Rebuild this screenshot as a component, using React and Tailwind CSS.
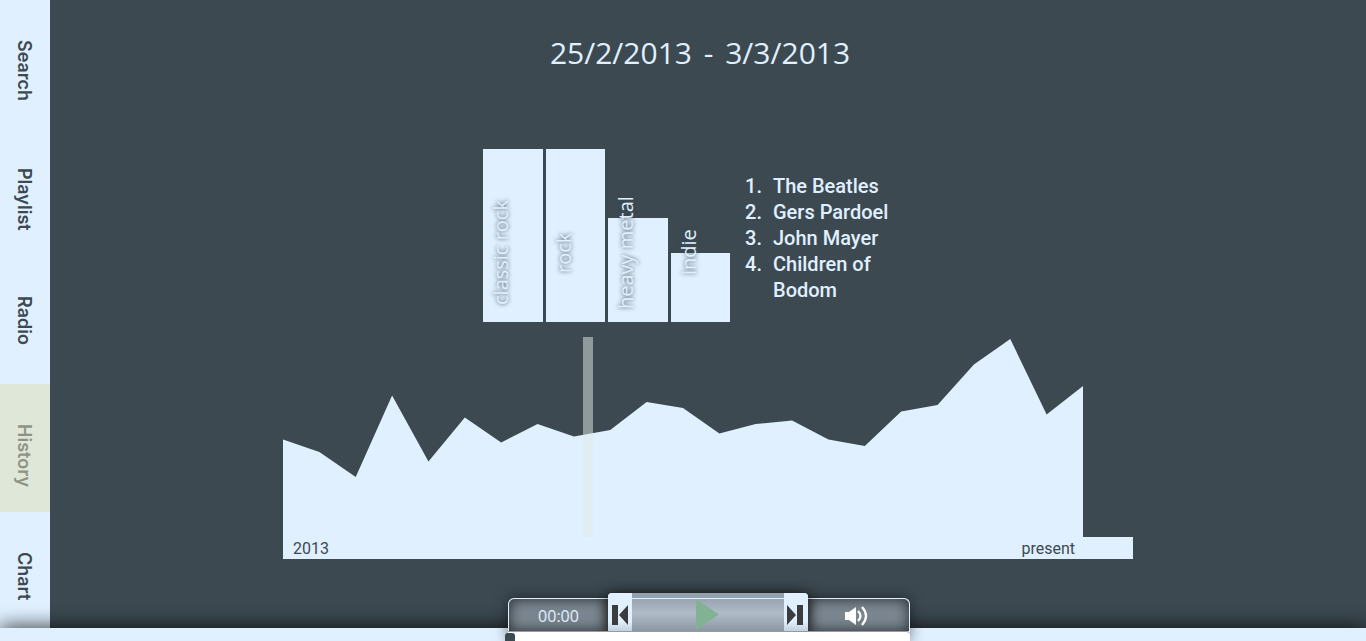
import React from "react";

const TABS = ["Search", "Playlist", "Radio", "History", "Chart"];

const GENRES = [
  { name: "classic rock", height: "h-[173px]" },
  { name: "rock", height: "h-[173px]" },
  { name: "heavy metal", height: "h-[104px]" },
  { name: "indie", height: "h-[69px]" },
];

const ARTISTS = ["The Beatles", "Gers Pardoel", "John Mayer", "Children of Bodom"];

// Distance of each sample from the top of the 200-unit plot.
const SAMPLES = [
  102.5, 115, 140, 58.5, 124.5, 80.5, 105.5, 87, 99.5, 93, 65, 71, 96.5, 87,
  83.5, 102.5, 109, 74.5, 68, 27.5, 2, 77.5, 49,
];

function Sidebar() {
  return (
    <nav className="w-[50px] shrink-0 overflow-hidden bg-[#e0f0ff]" aria-label="Sections">
      {TABS.map((tab) => {
        const active = tab === "History";
        return (
          <a
            key={tab}
            href={"#" + tab.toLowerCase()}
            aria-current={active ? "page" : undefined}
            className={
              "flex h-32 w-full items-center pt-10 pr-0.5 font-['Inter',sans-serif] text-lg leading-5 font-semibold [writing-mode:vertical-rl] " +
              (active ? "bg-[#dfe8d8] text-[#8f9385]" : "text-[#3c4951]")
            }
          >
            {tab}
          </a>
        );
      })}
    </nav>
  );
}

function GenreBars() {
  return (
    <div className="flex h-[173px] w-[247px] items-end gap-[3px]">
      {GENRES.map((g) => (
        <div key={g.name} className={"relative flex-1 bg-[#e0f0ff] " + g.height}>
          <span className="absolute bottom-0 left-1 h-[139px] rotate-180 text-center font-['Open_Sans',sans-serif] text-xl leading-7 whitespace-nowrap text-[#e0f0ff] [text-shadow:0_0_4px_#3c4951] [writing-mode:vertical-rl]">
            {g.name}
          </span>
        </div>
      ))}
    </div>
  );
}

function Timeline() {
  const step = 800 / (SAMPLES.length - 1);
  const line = SAMPLES.map((y, i) => `${i * step},${y}`).join(" ");
  return (
    <div className="w-[850px]">
      <svg viewBox="0 0 800 200" className="block h-[200px] w-[800px]" role="img" aria-label="Listening history">
        <polygon points={`0,200 ${line} 800,200`} fill="#e0f0ff" />
        <rect x="300" y="0" width="10" height="200" fill="#dfece8" fillOpacity="0.5" />
      </svg>
      <div className="flex h-[22px] justify-between bg-[#e0f0ff] pr-[58px] pl-2.5 text-base leading-6">
        <span>2013</span>
        <span>present</span>
      </div>
    </div>
  );
}

function Player() {
  return (
    <div className="w-[402px] shrink-0 rounded-t-md shadow-[0_0_14px_rgba(0,0,0,0.5)]">
      <div className="flex h-[33px] items-end rounded-t-md border border-b-0 border-[#e0f0ff] bg-[#7b8791]">
        <div className="flex h-8 w-[99px] items-center justify-center rounded-tl-md pt-0.5 font-['Open_Sans',sans-serif] text-base text-[#e0f0ff] shadow-[inset_0_0_14px_rgba(0,0,0,0.7)]">
          00:00
        </div>
        <div className="flex h-[38px] w-[200px] shrink-0 overflow-hidden rounded-t-sm bg-[#acb9c5] shadow-[0_0_14px_rgba(0,0,0,0.7)]">
          <button type="button" aria-label="Previous" className="flex w-6 items-end justify-center bg-linear-to-b from-[#e0f0ff] from-75% to-[#c3d0dd] pb-1.5">
            <svg viewBox="0 0 18 20" className="h-5 w-[18px]" fill="#3a3c3d">
              <path d="M1 0h6v20H1zM17 0v20L8 10z" />
            </svg>
          </button>
          <button type="button" aria-label="Play" className="flex flex-1 flex-col">
            <span className="h-1.5 w-full border-b border-[#e0f0ff] bg-[#93a0ae]" />
            <span className="flex w-full flex-1 items-start justify-center bg-linear-to-b from-[#98a4b0] via-[#b0bdc9] via-45% to-[#8b97a2]">
              <svg viewBox="0 0 24 31" className="h-[31px] w-6" fill="#82b193">
                <path d="M0 0l23 15.500L0 31z" />
              </svg>
            </span>
          </button>
          <button type="button" aria-label="Next" className="flex w-6 items-end justify-center bg-linear-to-b from-[#e0f0ff] from-75% to-[#c3d0dd] pr-0.5 pb-1.5">
            <svg viewBox="0 0 18 20" className="h-5 w-[18px]" fill="#3a3c3d">
              <path d="M11 0h6v20h-6zM1 0v20l9-10z" />
            </svg>
          </button>
        </div>
        <button
          type="button"
          aria-label="Volume"
          className="flex h-8 flex-1 items-center justify-center rounded-tr-md pt-0.5 pr-1 shadow-[inset_0_0_14px_rgba(0,0,0,0.7)]"
        >
          <svg viewBox="0 0 23 20" className="h-5 w-[23px]" fill="none" stroke="#fff" strokeWidth="2.200">
            <path d="M0 6h4l7-5v18l-7-5H0z" fill="#fff" stroke="none" />
            <path d="M13 5q5 5 0 10" />
            <path d="M17 1q8 9 0 18" />
          </svg>
        </button>
      </div>
      <div className="relative h-2.5 rounded-tr-sm border-t border-[#9a9a9a] bg-white">
        <div className="absolute top-px -left-[3px] h-2 w-2.5 rounded-t-[3px] bg-[#3c4951]" />
      </div>
    </div>
  );
}

export default function App() {
  return (
    <div className="flex h-screen flex-col overflow-hidden bg-[#3c4951] font-['Roboto',sans-serif] text-[#3c4951]">
      <div className="flex min-h-0 flex-1">
        <Sidebar />
        <main className="flex flex-1 flex-col items-center overflow-hidden">
          <h1 className="mt-8 pr-4 font-['Open_Sans',sans-serif] text-3xl leading-[42px] text-[#e0f0ff]">
            25/2/2013 <span className="mx-1">-</span> 3/3/2013
          </h1>
          <section className="mt-[75px] flex w-[450px]">
            <GenreBars />
            <ol className="mt-6 ml-[15px] flex-1 text-xl leading-[26px] font-medium text-[#e0f0ff]">
              {ARTISTS.map((artist, i) => (
                <li key={artist} className="flex">
                  <span className="w-7 shrink-0">{i + 1}.</span>
                  <span className="w-32">{artist}</span>
                </li>
              ))}
            </ol>
          </section>
          <section className="mt-[15px]">
            <Timeline />
          </section>
        </main>
      </div>
      <footer className="relative flex h-[13px] shrink-0 items-end justify-center bg-[#e0f0ff] pl-[52px] shadow-[0_0_20px_#000]">
        <Player />
      </footer>
    </div>
  );
}
